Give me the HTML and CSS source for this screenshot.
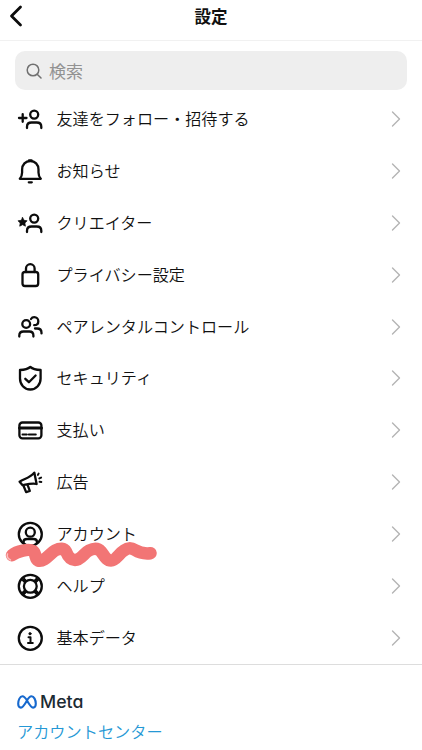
FILE: index.html
```html
<!DOCTYPE html>
<html lang="ja">
<head>
<meta charset="utf-8">
<title>設定</title>
<link rel="stylesheet" href="styles.css">
</head>
<body>
<header class="topbar">
  <svg class="back" viewBox="0 0 16 22"><path d="M12.5 2 3.5 11l9 9"/></svg>
  <h1>設定</h1>
</header>
<div class="search">
  <svg class="glass" viewBox="0 0 16 16"><circle cx="7" cy="7" r="5.800"/><path d="m11.200 11.200 3.800 3.800"/></svg>
  <span>検索</span>
</div>
<ul class="menu">
  <li><svg class="icon" viewBox="0 0 26 26"><path d="M2 12h7.500M5.700 8.200v7.600"/><circle cx="17.200" cy="8.600" r="4"/><path d="M10 22v-1.200c0-2.800 1.800-4.300 4.500-4.300h5.200c2.800 0 4.600 1.500 4.600 4.300V22"/></svg><span>友達をフォロー・招待する</span><svg class="chev" viewBox="0 0 10 16"><path d="m1.500 1 7 7-7 7"/></svg></li>
  <li><svg class="icon" viewBox="0 0 26 26"><path d="M2.800 20.800h21c-2-2-2.300-4-2.300-6.200v-3C21.500 6.500 18 3 13.300 3S5.100 6.500 5.100 11.600v3c0 2.200-.3 4.200-2.300 6.200z"/><path d="M12 2.500h2.600M11.800 24.300h3"/></svg><span>お知らせ</span><svg class="chev" viewBox="0 0 10 16"><path d="m1.500 1 7 7-7 7"/></svg></li>
  <li><svg class="icon" viewBox="0 0 26 26"><path class="solid" d="m5.600 7.500 1.400 2.800 3.100.5-2.200 2.200.5 3.200-2.800-1.500-2.900 1.500.5-3.200L1 10.800l3.200-.5z"/><circle cx="17.200" cy="8.600" r="4"/><path d="M10 22v-1.200c0-2.800 1.800-4.300 4.500-4.300h5.200c2.800 0 4.600 1.500 4.600 4.300V22"/></svg><span>クリエイター</span><svg class="chev" viewBox="0 0 10 16"><path d="m1.500 1 7 7-7 7"/></svg></li>
  <li><svg class="icon" viewBox="0 0 26 26"><rect x="5.500" y="10" width="15.700" height="14" rx="2.500"/><path d="M9 10V6.500a4.300 4.300 0 0 1 8.600 0V10"/></svg><span>プライバシー設定</span><svg class="chev" viewBox="0 0 10 16"><path d="m1.500 1 7 7-7 7"/></svg></li>
  <li><svg class="icon" viewBox="0 0 26 26"><circle cx="9.200" cy="10" r="3.900"/><path d="M2.300 22.500v-1c0-2.700 1.700-4 4.200-4h5.800c2.500 0 4.100 1.300 4.100 4v1M14 5c.8-1.300 1.900-1.800 3.300-1.800a4 4 0 0 1 4 4c0 2.400-1.700 4-4.100 4M18 14.500h2c2.900 0 4.500 1.600 4.500 4.200v.7"/></svg><span>ペアレンタルコントロール</span><svg class="chev" viewBox="0 0 10 16"><path d="m1.500 1 7 7-7 7"/></svg></li>
  <li><svg class="icon" viewBox="0 0 26 26"><path d="M13.300 2c-2 1.700-5.800 2.800-10.300 3v8.500C3 19.500 7.200 24.500 13.300 24.500s10.300-5 10.300-11V5c-4.500-.2-8.300-1.300-10.300-3z"/><path d="m8.300 13.800 3.600 3.400L18.600 10.500"/></svg><span>セキュリティ</span><svg class="chev" viewBox="0 0 10 16"><path d="m1.500 1 7 7-7 7"/></svg></li>
  <li><svg class="icon" viewBox="0 0 26 26"><rect x="2.400" y="5.500" width="22" height="15.800" rx="3"/><path class="thick" d="M2.500 10.900h22"/><path class="medium" d="M5.500 17.600h4.300M11.800 17.600h7"/></svg><span>支払い</span><svg class="chev" viewBox="0 0 10 16"><path d="m1.500 1 7 7-7 7"/></svg></li>
  <li><svg class="icon" viewBox="0 0 26 26"><path d="M17.300 3.600 19.600 15c-4-1.100-8.300 0-14 1.200L2.600 12.700C8.500 9.500 14 8 17.300 3.600zM6.300 16.300l2.800 6.800 3.700-1.300-2.200-5.900"/><path class="medium" d="m20.900 5.900.7-1.300M22.300 9.400l1.800-.8M22.600 12.800l1.700.2"/></svg><span>広告</span><svg class="chev" viewBox="0 0 10 16"><path d="m1.500 1 7 7-7 7"/></svg></li>
  <li><svg class="icon" viewBox="0 0 26 26"><circle cx="13.300" cy="13.300" r="11.500"/><circle cx="13.300" cy="11.200" r="4.500"/><path d="M6.500 22v-1c0-2 1.500-3 3.500-3h6.500c2 0 3.500 1 3.500 3v1"/></svg><span>アカウント</span><svg class="chev" viewBox="0 0 10 16"><path d="m1.500 1 7 7-7 7"/></svg>
    <svg class="scribble" viewBox="0 0 170 34"><path d="M12 16.200C17 12 29 9.500 33 12c3 2 2 8 5 9.500 6 2 12-7 17-10 5-2.500 9-2.500 11 1 2 5 4 8.500 9 8.500 6 0 9-7 14-9.500 5-2.500 9-2.500 12 1s5 9 10 9 8-7 13-10c4-3 7-3 11-.5 4 2.500 9 4 15.500 3.200"/><path class="streak" d="M7.500 15c-1 3 1 5 3 6"/></svg></li>
  <li><svg class="icon" viewBox="0 0 26 26"><circle cx="13.300" cy="13.300" r="11.500"/><circle cx="13.300" cy="13.300" r="6.400"/><path class="spoke" d="m5.800 5.800 3 3M20.800 5.800l-3 3M5.800 20.800l3-3M20.800 20.800l-3-3"/></svg><span>ヘルプ</span><svg class="chev" viewBox="0 0 10 16"><path d="m1.500 1 7 7-7 7"/></svg></li>
  <li><svg class="icon" viewBox="0 0 26 26"><circle cx="13.300" cy="13.300" r="11.500"/><circle class="solid" cx="13" cy="8.700" r="1.200"/><path class="medium" d="M11.500 12.300h2v5.600M11 18h4.800"/></svg><span>基本データ</span><svg class="chev" viewBox="0 0 10 16"><path d="m1.500 1 7 7-7 7"/></svg></li>
</ul>
<footer>
  <div class="brand">
    <svg viewBox="0 0 20 14"><path d="M10 5.500C8.500 3 7.200 1.300 5.400 1.300 3 1.300 1.200 5 1.200 8.800c0 2.400 1 3.800 2.700 3.800C6 12.600 7.500 10 10 5.500c1.500-2.700 2.700-4.200 4.500-4.200 2.500 0 4.300 3.700 4.300 7.500 0 2.400-1 3.800-2.700 3.800-2.100 0-3.600-2.700-6.100-7.100z"/></svg>
    <span>Meta</span>
  </div>
  <a class="center-link">アカウントセンター</a>
</footer>
</body>
</html>
```
FILE: styles.css
```css
* { box-sizing: border-box; }
body {
  margin: 0;
  height: 750px;
  overflow: hidden;
  background: #fff;
  color: #111;
  font-family: "Noto Sans CJK JP", sans-serif;
}
svg { display: block; flex: none; fill: none; stroke: #0c0c0c; stroke-linecap: round; stroke-linejoin: round; }
.topbar {
  display: grid;
  grid-template-columns: 40px 1fr 40px;
  align-items: center;
  height: 41px;
  padding-bottom: 8px;
  border-bottom: 1px solid #f1f1f1;
}
.back { width: 16px; height: 22px; margin-left: 8px; stroke-width: 2.8; }
h1 { margin: 0; text-align: center; font-size: 16.5px; line-height: 24px; font-weight: 700; }
.search {
  display: flex;
  align-items: center;
  gap: 7px;
  height: 39px;
  margin: 10px 15px 3px;
  padding-left: 11px;
  border-radius: 10px;
  background: #eee;
  color: #929292;
  font-size: 17px;
}
.glass { width: 16px; height: 16px; stroke: #707070; stroke-width: 1.5; }
.menu {
  display: grid;
  grid-auto-rows: 51.9px;
  height: 572px;
  margin: 0;
  padding: 0;
  list-style: none;
  border-bottom: 1px solid #ddd;
}
.menu li {
  position: relative;
  display: flex;
  align-items: center;
  padding: 0 21px 0 17px;
  font-size: 16.1px;
  font-weight: 350;
}
.menu span { flex: 1; margin-left: 13.5px; padding-bottom: 2px; line-height: 24px; }
.icon { width: 26px; height: 26px; stroke-width: 2.3; }
.icon .thick { stroke-width: 3; }
.icon .spoke { stroke-width: 4; stroke-linecap: butt; }
.icon .medium { stroke-width: 2; }
.icon .solid { fill: #0c0c0c; stroke-width: .7; }
.chev { width: 10px; height: 16px; stroke: #b4b4b4; stroke-width: 1.4; }
.menu .scribble {
  position: absolute;
  left: 0;
  top: 31px;
  width: 170px;
  height: 34px;
  z-index: 1;
  stroke: #f27575;
  stroke-width: 12.5;
}
.scribble .streak { stroke: #fbc0c0; stroke-width: 1.5; }
footer { padding: 26px 17px 0; }
.brand { display: flex; align-items: center; gap: 3px; height: 22px; }
.brand svg { width: 20px; height: 14px; stroke: #1769ce; stroke-width: 2.1; }
.brand span {
  font: 500 17.7px/22px Inter, sans-serif;
  font-feature-settings: "cv11";
  color: #1c2b33;
}
.center-link { display: block; margin-top: 6px; font-size: 16.2px; font-weight: 350; line-height: 24px; color: #2598d5; }
```
